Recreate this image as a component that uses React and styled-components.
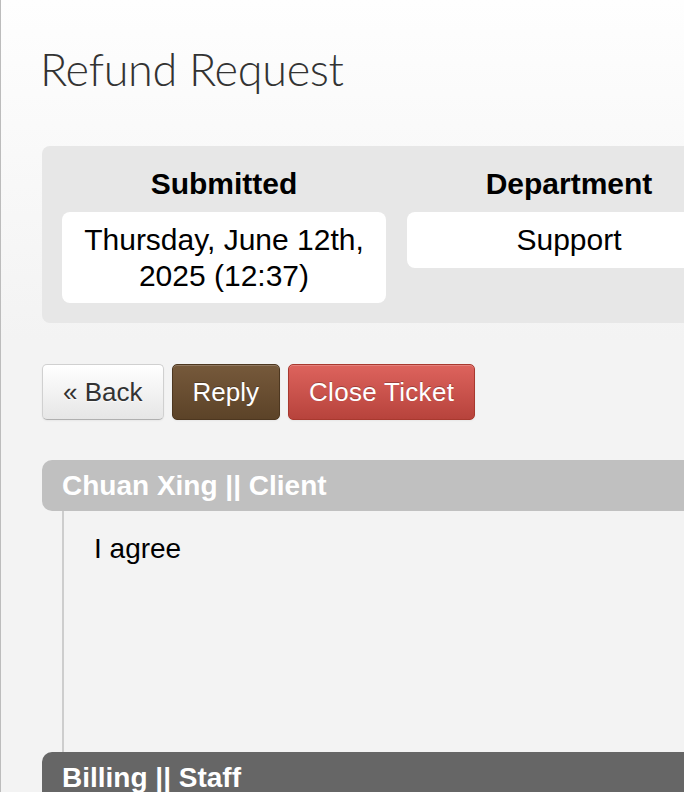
import styled, { createGlobalStyle } from "styled-components";

const GlobalStyle = createGlobalStyle`
  html, body {
    margin: 0;
    padding: 0;
    overflow: hidden;
    background: #f3f3f3;
  }
  body {
    font-family: "Liberation Sans", Arial, sans-serif;
  }
`;

const info = [
  { label: "Submitted", value: "Thursday, June 12th, 2025 (12:37)" },
  { label: "Department", value: "Support" },
  { label: "Status", value: "Open" },
];

const replies = [
  { author: "Chuan Xing", role: "Client", message: "I agree", staff: false },
  { author: "Billing", role: "Staff", message: "", staff: true },
];

export default function App() {
  return (
    <>
      <GlobalStyle />
      <Page>
        <Title>Refund Request</Title>

        <InfoBox>
          {info.map((item) => (
            <InfoColumn key={item.label}>
              <InfoLabel>{item.label}</InfoLabel>
              <InfoValue>{item.value}</InfoValue>
            </InfoColumn>
          ))}
        </InfoBox>

        <Actions>
          <Button $variant="default">« Back</Button>
          <Button $variant="brown">Reply</Button>
          <Button $variant="danger">Close Ticket</Button>
        </Actions>

        <Thread>
          {replies.map((reply) => (
            <Reply key={reply.author}>
              <ReplyHeader $staff={reply.staff}>
                {reply.author} || {reply.role}
              </ReplyHeader>
              <ReplyBody>{reply.message}</ReplyBody>
            </Reply>
          ))}
        </Thread>
      </Page>
    </>
  );
}

const Page = styled.div`
  width: 1100px;
  min-height: 792px;
  box-sizing: border-box;
  padding: 41px 0 40px 41px;
  border-left: 1px solid #bcbcbc;
  background: linear-gradient(#fefefe 0px, #f3f3f3 340px, #f3f3f3 100%);
`;

const Title = styled.h1`
  margin: 0 0 0 -2px;
  font-family: Lato, "Open Sans", sans-serif;
  font-weight: 300;
  font-size: 45px;
  line-height: 56px;
  color: #333;
  letter-spacing: -0.3px;
`;

const InfoBox = styled.section`
  margin-top: 49px;
  padding: 20px;
  background: #e7e7e7;
  border-radius: 8px;
  display: grid;
  grid-template-columns: repeat(3, 324px);
  gap: 21px;
  align-items: start;
`;

const InfoColumn = styled.div`
  display: flex;
  flex-direction: column;
  gap: 10px;
`;

const InfoLabel = styled.h3`
  margin: 0;
  font-size: 30px;
  line-height: 36px;
  font-weight: bold;
  text-align: center;
  color: #000;
`;

const InfoValue = styled.div`
  padding: 10px;
  background: #fff;
  border-radius: 8px;
  font-size: 30px;
  line-height: 35.5px;
  text-align: center;
  color: #000;
`;

const Actions = styled.div`
  display: flex;
  gap: 8px;
  margin-top: 41px;
`;

const variants = {
  default: `
    color: #333;
    background: linear-gradient(#ffffff, #e6e6e6);
    border-color: #d0d0d0 #d0d0d0 #b0b0b0;
    text-shadow: 0 1px 1px rgba(255, 255, 255, 0.75);
  `,
  brown: `
    color: #fff;
    background: linear-gradient(#76593b, #5c4328);
    border-color: #4d3720;
    text-shadow: 0 -1px 0 rgba(0, 0, 0, 0.25);
  `,
  danger: `
    color: #fff;
    background: linear-gradient(#dd635d, #b7433c);
    border-color: #a8392f;
    text-shadow: 0 -1px 0 rgba(0, 0, 0, 0.25);
    letter-spacing: 0.3px;
  `,
};

const Button = styled.button`
  height: 56px;
  padding: 0 20px;
  border: 1px solid;
  border-radius: 5px;
  font-family: "Liberation Sans", Arial, sans-serif;
  font-size: 26px;
  box-shadow: inset 0 1px 0 rgba(255, 255, 255, 0.2),
    0 1px 2px rgba(0, 0, 0, 0.05);
  cursor: pointer;
  ${({ $variant }) => variants[$variant]}
`;

const Thread = styled.div`
  margin-top: 40px;
  display: flex;
  flex-direction: column;
`;

const Reply = styled.article`
  display: flex;
  flex-direction: column;
`;

const ReplyHeader = styled.div`
  height: 51px;
  padding-left: 20px;
  border-radius: 10px 0 0 10px;
  background: ${({ $staff }) => ($staff ? "#666666" : "#c0c0c0")};
  color: #fff;
  font-size: 28px;
  font-weight: bold;
  line-height: 51px;
`;

const ReplyBody = styled.div`
  margin-left: 20px;
  min-height: 201px;
  padding: 20px 30px;
  border-left: 2px solid #cdcdcd;
  font-size: 28px;
  line-height: 36px;
  color: #000;
`;
